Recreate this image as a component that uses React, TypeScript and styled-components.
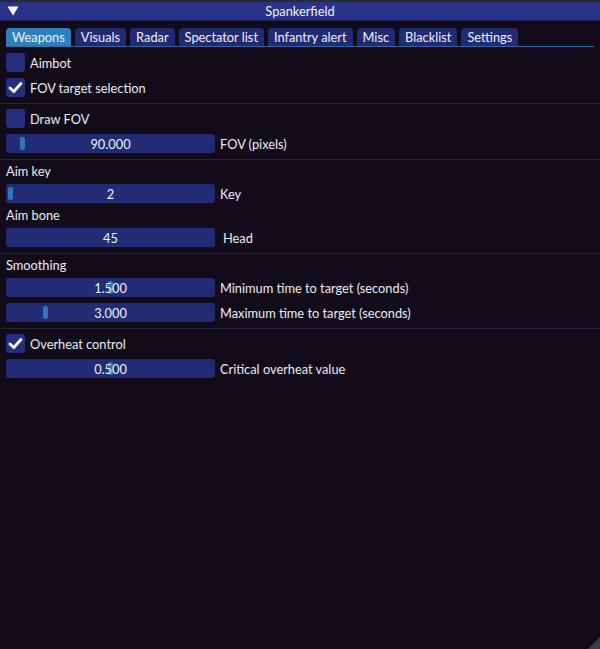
import styled, { createGlobalStyle } from "styled-components";

const GlobalStyle = createGlobalStyle`
  html, body {
    margin: 0;
    padding: 0;
    background: #110b1a;
  }
  body {
    font-family: Lato, "Noto Sans", sans-serif;
    font-size: 12.8px;
    color: #ececf0;
  }
`;

// Window frame
const Window = styled.div`
  position: relative;
  width: 600px;
  height: 649px;
  box-sizing: border-box;
  border-top: 2px solid #2c2c30;
  background: #110b1a;
  overflow: hidden;
`;

const TitleBar = styled.div`
  height: 18px;
  background: #29338a;
  border-bottom: 1px solid #1c2060;
  display: flex;
  align-items: center;
  justify-content: center;
  position: relative;
  color: #f2f2f6;
  line-height: 18px;
`;

const Collapse = styled.svg`
  position: absolute;
  left: 7px;
  top: 4px;
`;

const Body = styled.div`
  padding: 7px 6px 0 6px;
  display: flex;
  flex-direction: column;
  gap: 6px;
`;

// Tabs
const TabBar = styled.div`
  display: flex;
  gap: 4px;
  border-bottom: 1px solid #2a6aa0;
`;

const Tab = styled.div<{ active?: boolean }>`
  height: 18px;
  line-height: 18px;
  padding: 0 6px;
  border-radius: 4px 4px 0 0;
  background: ${({ active }) => (active ? "#2b80bd" : "#212a72")};
  color: #eef0f6;
  white-space: nowrap;
`;

// Widgets
const Row = styled.div`
  display: flex;
  align-items: center;
  gap: 5px;
  height: 19px;
`;

const TextRow = styled.div`
  height: 13px;
  line-height: 13px;
`;

const Box = styled.div`
  width: 19px;
  height: 19px;
  border-radius: 3px;
  background: #252f7b;
  display: flex;
  align-items: center;
  justify-content: center;
`;

const Separator = styled.div`
  height: 1px;
  background: #2a2536;
  margin: 0 -6px -1px -6px;
`;

const Slider = styled.div`
  position: relative;
  width: 209px;
  height: 19px;
  border-radius: 3px;
  background: #222c74;
  display: flex;
  align-items: center;
  justify-content: center;
  color: #f0f0f4;
`;

const Grab = styled.div`
  position: absolute;
  top: 3px;
  width: 5px;
  height: 13px;
  border-radius: 2px;
  background: #2f78b8;
`;

const SliderValue = styled.span`
  position: relative;
`;

const Label = styled.span<{ pad?: number }>`
  padding-left: ${({ pad }) => pad || 0}px;
  white-space: nowrap;
`;

const Grip = styled.div`
  position: absolute;
  right: 0;
  bottom: 0;
  width: 0;
  height: 0;
  border-left: 12px solid transparent;
  border-bottom: 12px solid #3c3a44;
`;

type CheckProps = { label: string; checked?: boolean };

const Check = ({ label, checked }: CheckProps) => (
  <Row>
    <Box>
      {checked && (
        <svg width="15" height="13" viewBox="0 0 15 13">
          <path
            d="M2 7 L5.8 10.5 L13 2.5"
            fill="none"
            stroke="#ffffff"
            strokeWidth="2.8"
            strokeLinecap="round"
            strokeLinejoin="round"
          />
        </svg>
      )}
    </Box>
    <Label>{label}</Label>
  </Row>
);

type SliderProps = { value: string; label: string; grab?: number; pad?: number };

const SliderRow = ({ value, label, grab, pad }: SliderProps) => (
  <Row>
    <Slider>
      {grab !== undefined && <Grab style={{ left: grab }} />}
      <SliderValue>{value}</SliderValue>
    </Slider>
    <Label pad={pad}>{label}</Label>
  </Row>
);

const tabs = [
  "Weapons",
  "Visuals",
  "Radar",
  "Spectator list",
  "Infantry alert",
  "Misc",
  "Blacklist",
  "Settings",
];

const App = () => {
  return (
    <>
      <GlobalStyle />
      <Window>
        <TitleBar>
          <Collapse width="12" height="10" viewBox="0 0 12 10">
            <path d="M0.5 0.5 L11.5 0.5 L6 9.5 Z" fill="#ffffff" />
          </Collapse>
          Spankerfield
        </TitleBar>
        <Body>
          <TabBar>
            {tabs.map((t, i) => (
              <Tab key={t} active={i === 0}>
                {t}
              </Tab>
            ))}
          </TabBar>
          <Check label="Aimbot" />
          <Check label="FOV target selection" checked />
          <Separator />
          <Check label="Draw FOV" />
          <SliderRow value="90.000" label="FOV (pixels)" grab={14} />
          <Separator />
          <TextRow>Aim key</TextRow>
          <SliderRow value="2" label="Key" grab={2} />
          <TextRow>Aim bone</TextRow>
          <SliderRow value="45" label="Head" pad={3} />
          <Separator />
          <TextRow>Smoothing</TextRow>
          <SliderRow value="1.500" label="Minimum time to target (seconds)" grab={102} />
          <SliderRow value="3.000" label="Maximum time to target (seconds)" grab={37} />
          <Separator />
          <Check label="Overheat control" checked />
          <SliderRow value="0.500" label="Critical overheat value" grab={102} />
        </Body>
        <Grip />
      </Window>
    </>
  );
};

export default App;
